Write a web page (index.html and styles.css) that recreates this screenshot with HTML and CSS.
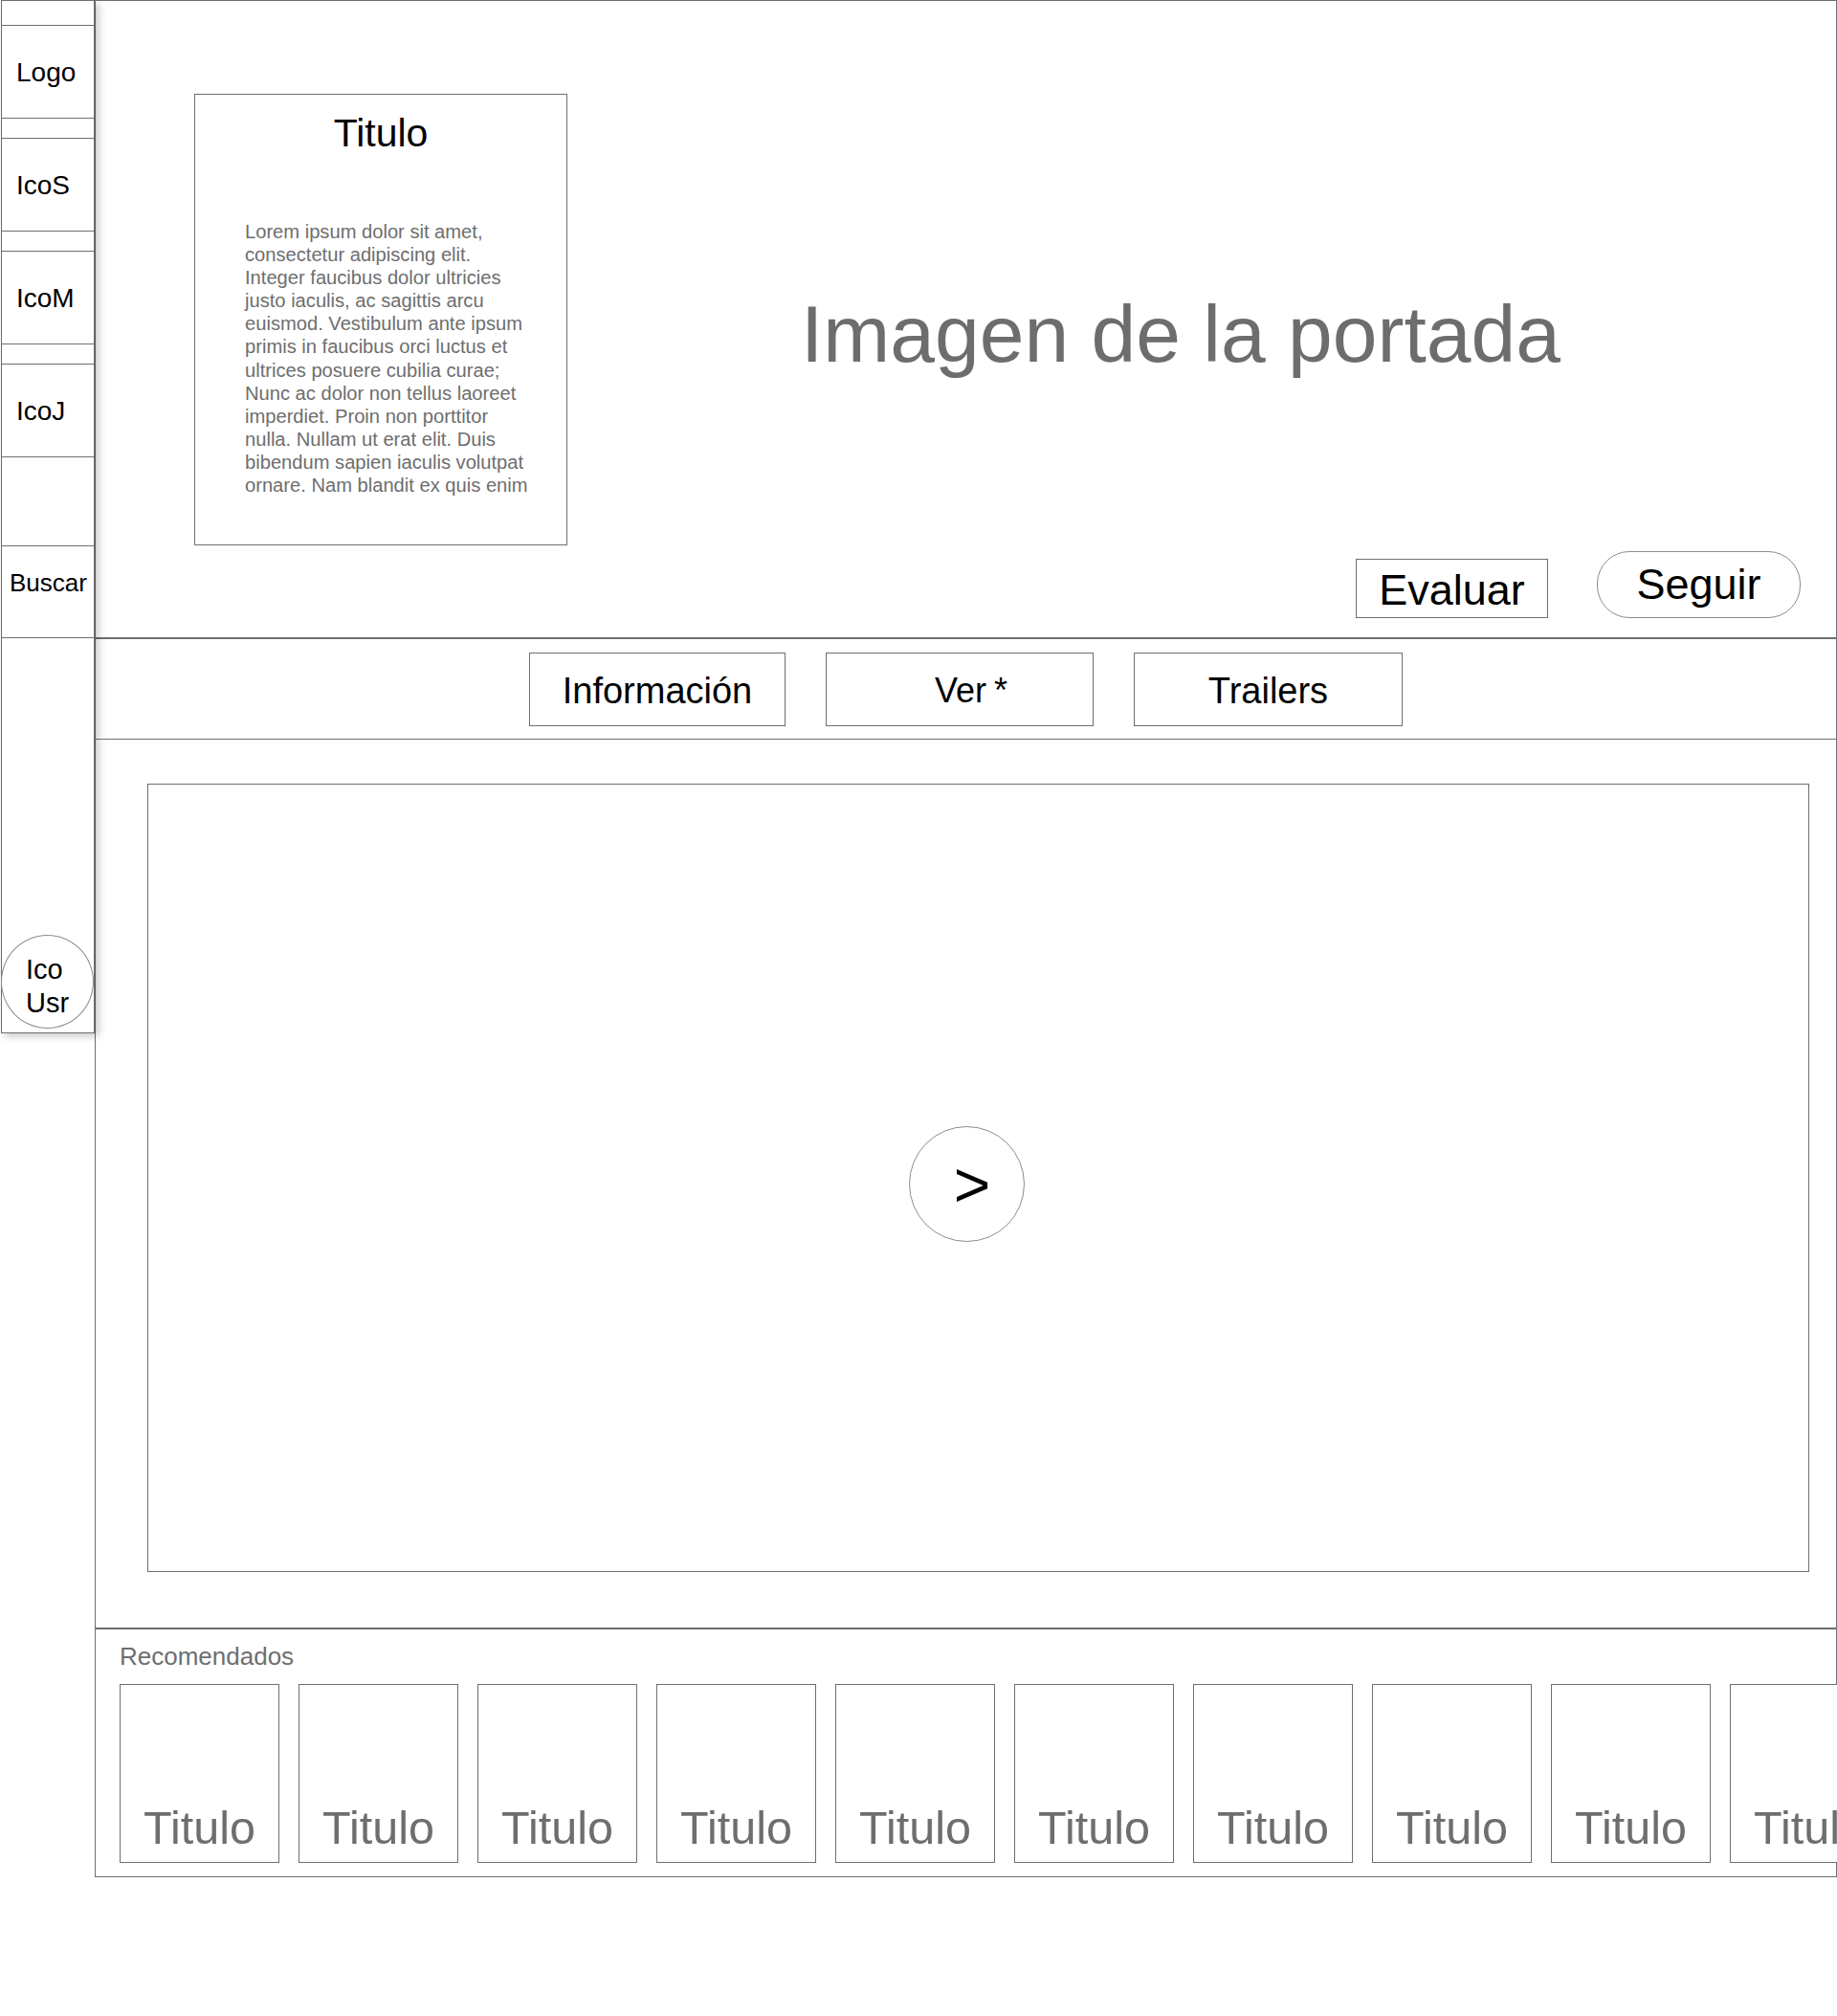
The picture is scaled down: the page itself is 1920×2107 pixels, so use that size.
FILE: index.html
```html
<!DOCTYPE html>
<html lang="es">
<head>
<meta charset="utf-8">
<title>Portada</title>
<link rel="stylesheet" href="styles.css">
</head>
<body>
<div class="page">
  <nav class="sidebar">
    <div class="side-item first">Logo</div>
    <div class="side-item">IcoS</div>
    <div class="side-item">IcoM</div>
    <div class="side-item">IcoJ</div>
    <div class="side-item search">Buscar</div>
    <div class="user-icon"><span>Ico<br>Usr</span></div>
  </nav>
  <main class="main">
    <section class="hero">
      <div class="hero-top">
        <div class="info-card">
          <h2 class="info-title">Titulo</h2>
          <p class="info-text">Lorem ipsum dolor sit amet,<br>consectetur adipiscing elit.<br>Integer faucibus dolor ultricies<br>justo iaculis, ac sagittis arcu<br>euismod. Vestibulum ante ipsum<br>primis in faucibus orci luctus et<br>ultrices posuere cubilia curae;<br>Nunc ac dolor non tellus laoreet<br>imperdiet. Proin non porttitor<br>nulla. Nullam ut erat elit. Duis<br>bibendum sapien iaculis volutpat<br>ornare. Nam blandit ex quis enim</p>
        </div>
        <div class="cover-label">Imagen de la portada</div>
      </div>
      <div class="hero-actions">
        <div class="btn-rate">Evaluar</div>
        <div class="btn-follow">Seguir</div>
      </div>
    </section>
    <section class="tabs">
      <div class="tab tab-info">Información</div>
      <div class="tab tab-watch">Ver *</div>
      <div class="tab tab-trailers">Trailers</div>
    </section>
    <section class="player">
      <div class="video">
        <div class="play">&gt;</div>
      </div>
    </section>
    <section class="recs">
      <div class="recs-label">Recomendados</div>
      <div class="recs-row">
        <div class="rec-card"><span>Titulo</span></div>
        <div class="rec-card"><span>Titulo</span></div>
        <div class="rec-card"><span>Titulo</span></div>
        <div class="rec-card"><span>Titulo</span></div>
        <div class="rec-card"><span>Titulo</span></div>
        <div class="rec-card"><span>Titulo</span></div>
        <div class="rec-card"><span>Titulo</span></div>
        <div class="rec-card"><span>Titulo</span></div>
        <div class="rec-card"><span>Titulo</span></div>
        <div class="rec-card"><span>Titulo</span></div>
      </div>
    </section>
  </main>
</div>
</body>
</html>
```

FILE: styles.css
```css
html {
  overflow: hidden;
  background: #ffffff;
}
body {
  margin: 0;
  font-family: "Liberation Sans", Arial, Helvetica, sans-serif;
  color: #000;
  background: #ffffff;
}
.page {
  display: flex;
  align-items: flex-start;
  width: 1920px;
}

/* Sidebar */
.sidebar {
  position: relative;
  z-index: 2;
  box-sizing: border-box;
  flex: 0 0 98px;
  width: 98px;
  height: 1080px;
  margin-left: 1px;
  border: 1px solid #6f6f6f;
  background: #fff;
  box-shadow: 4px 3px 8px rgba(0, 0, 0, 0.22);
  display: flex;
  flex-direction: column;
}
.side-item {
  box-sizing: border-box;
  height: 98px;
  margin-top: 20px;
  border-top: 1px solid #6f6f6f;
  border-bottom: 1px solid #6f6f6f;
  display: flex;
  align-items: center;
  padding-left: 15px;
  padding-top: 2px;
  font-size: 28px;
  line-height: 32px;
  color: #000;
}
.side-item.first {
  margin-top: 25px;
}
.side-item.search {
  margin-top: 92px;
  height: 97px;
  padding-left: 8px;
  padding-top: 0;
  padding-bottom: 20px;
  font-size: 26px;
}
.user-icon {
  box-sizing: border-box;
  width: 97px;
  height: 98px;
  margin-top: 310px;
  margin-left: -1px;
  border: 1px solid #8c8c8c;
  border-radius: 50%;
  display: flex;
  align-items: center;
  padding-left: 25px;
  padding-top: 9px;
  font-size: 29px;
  line-height: 34.6px;
}

/* Main */
.main {
  box-sizing: border-box;
  flex: 0 0 1821px;
  width: 1821px;
  height: 1962px;
  border: 1px solid #6f6f6f;
  display: flex;
  flex-direction: column;
}

.hero {
  height: 667px;
  flex: 0 0 667px;
  box-sizing: border-box;
  border-bottom: 2px solid #6f6f6f;
  padding-top: 97px;
  display: flex;
  flex-direction: column;
}
.hero-top {
  display: flex;
  align-items: flex-start;
  padding-left: 103px;
}
.info-card {
  box-sizing: border-box;
  width: 390px;
  height: 472px;
  border: 1px solid #6f6f6f;
  padding: 17px 0 0 52px;
}
.info-title {
  margin: 0 0 0 -52px;
  font-weight: normal;
  font-size: 41px;
  line-height: 47px;
  text-align: center;
  color: #000;
}
.info-text {
  margin: 67px 0 0 0;
  font-size: 20.15px;
  line-height: 24.1px;
  color: #6e6e6e;
  white-space: nowrap;
}
.cover-label {
  margin-left: 244px;
  margin-top: 209px;
  font-size: 84px;
  line-height: 84px;
  color: #6d6d6d;
  white-space: nowrap;
}
.hero-actions {
  display: flex;
  justify-content: flex-end;
  align-items: flex-end;
  gap: 51px;
  margin-top: 6px;
  padding-right: 37px;
}
.btn-rate {
  box-sizing: border-box;
  width: 201px;
  height: 62px;
  border: 1px solid #6f6f6f;
  display: flex;
  align-items: center;
  justify-content: center;
  font-size: 45px;
  line-height: 50px;
  padding-top: 3px;
}
.btn-follow {
  box-sizing: border-box;
  width: 213px;
  height: 70px;
  border: 1px solid #8c8c8c;
  border-radius: 34px;
  display: flex;
  align-items: center;
  justify-content: center;
  font-size: 45px;
  line-height: 50px;
}

/* Tabs */
.tabs {
  flex: 0 0 105px;
  height: 105px;
  box-sizing: border-box;
  border-bottom: 1px solid #6f6f6f;
  display: flex;
  justify-content: center;
  align-items: flex-start;
  gap: 42px;
  padding-top: 14px;
}
.tab {
  box-sizing: border-box;
  height: 77px;
  border: 1px solid #6f6f6f;
  display: flex;
  align-items: center;
  justify-content: center;
  font-size: 38px;
  line-height: 44px;
  padding-top: 2px;
}
.tab-info { width: 268px; }
.tab-watch {
  width: 280px;
  padding-left: 24px;
  word-spacing: -2px;
  font-size: 36px;
}
.tab-trailers { width: 281px; }

/* Player */
.player {
  flex: 0 0 930px;
  height: 930px;
  box-sizing: border-box;
  border-bottom: 2px solid #6f6f6f;
  padding: 46px 28px 58px 54px;
}
.video {
  box-sizing: border-box;
  height: 824px;
  border: 1px solid #6f6f6f;
  display: flex;
  align-items: center;
  justify-content: center;
}
.play {
  box-sizing: border-box;
  width: 121px;
  height: 121px;
  margin-right: 25px;
  margin-top: 13px;
  border: 1px solid #8c8c8c;
  border-radius: 50%;
  display: flex;
  align-items: center;
  justify-content: center;
  padding-left: 12px;
  font-size: 66px;
  line-height: 66px;
  color: #000;
}

/* Recommended */
.recs {
  flex: 1 1 auto;
  padding: 14px 0 14px 25px;
}
.recs-label {
  font-size: 26px;
  line-height: 29px;
  color: #6e6e6e;
}
.recs-row {
  display: flex;
  gap: 20px;
  margin-top: 14px;
}
.rec-card {
  flex: 0 0 167px;
  box-sizing: border-box;
  width: 167px;
  height: 187px;
  border: 1px solid #6f6f6f;
  background: #fff;
  display: flex;
  align-items: flex-end;
  justify-content: center;
  padding-bottom: 9px;
  font-size: 48.5px;
  line-height: 54px;
  color: #6e6e6e;
  white-space: nowrap;
}
```
